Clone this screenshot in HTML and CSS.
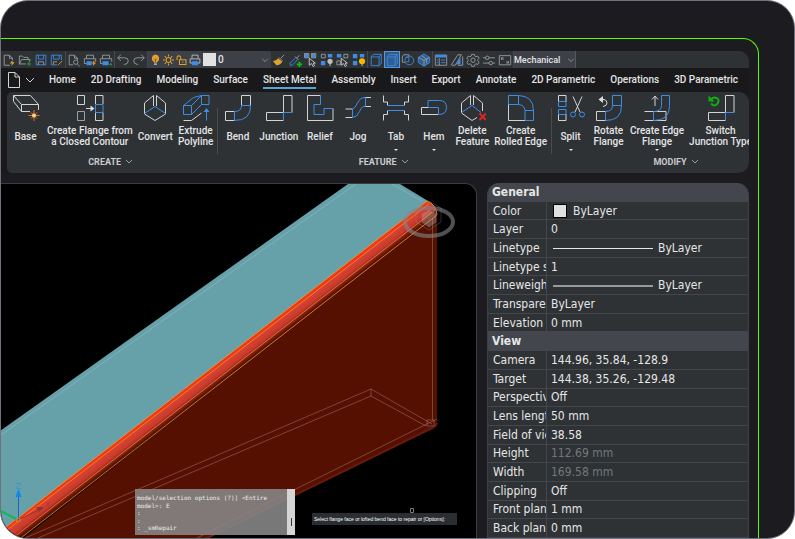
FILE: index.html
```html
<!DOCTYPE html>
<html lang="en">
<head>
<meta charset="utf-8">
<title>Sheet Metal</title>
<link rel="stylesheet" href="styles.css">
</head>
<body>
<div class="window">
<div class="frame">
<header class="app-head">
  <div class="quickbar">
    <div class="quick-group">
      <button aria-label="New"><svg viewBox="0 0 16 16"><path class="g" d="M9 14H2.500V2.500H8.500L12 6V8M8.500 2.500V6H12"/><path class="of" d="M12 8l-3 4h2.500l-1 3 4-4.500h-2.500z"/></svg></button>
      <button aria-label="Open"><svg viewBox="0 0 16 16"><path class="g" d="M1.500 13V3.500H5L6.500 5H11.500V7.500M1.500 12.500L4 7.500H14L13 10M1.500 12.500H9"/><path class="gr" d="M12.500 10V15M10 12.500H15"/></svg></button>
      <button aria-label="Save"><svg viewBox="0 0 16 16"><path class="b" d="M2.500 2.500H13.500V13.500H2.500zM5 2.500V7H11V2.500"/><path class="g" d="M5 13.500V10H11V13.500"/></svg></button>
      <button aria-label="Save as"><svg viewBox="0 0 16 16"><path class="b" d="M8 13.500H1.500V2.500H13V8M4 2.500V7H10.500V2.500"/><path class="g" d="M4 13V10H8"/><path class="o" d="M9 14L14 9"/></svg></button>
    </div>
    <div class="quick-group">
      <button aria-label="Preview"><svg viewBox="0 0 16 16"><path class="g" d="M7 13.500H2.500V2.500H8.500L12 6V8M8.500 2.500V6H12M12 13L14.500 15"/><circle class="g" cx="10" cy="10.500" r="2.500"/></svg></button>
      <button aria-label="Quick print"><svg viewBox="0 0 16 16"><path class="g" d="M4 6V2.500H12V6M4 12H1.500V6.500H14.500V10"/><path class="bf" d="M4 9.500H10V14H4z"/><path class="of" d="M13 8l-3 4h2l-1 3 4-4h-2z"/></svg></button>
      <button aria-label="Print"><svg viewBox="0 0 16 16"><path class="g" d="M4 6V2.500H12V6M4 12H1.500V6.500H14.500V10"/><path class="bf" d="M4 9.500H11V14H4z"/><path class="gr" d="M12 13H15M13.500 11.500V14.500"/></svg></button>
    </div>
    <div class="quick-group">
      <button aria-label="Undo"><svg viewBox="0 0 16 16"><path class="g" d="M5.500 2L2 5.500L5.500 9M2 5.500H10Q14 5.500 14 9T10 13H9"/></svg></button>
      <button aria-label="Redo"><svg viewBox="0 0 16 16"><path class="g" d="M10.500 2L14 5.500L10.500 9M14 5.500H6Q2 5.500 2 9T6 13H7"/></svg></button>
    </div>
    <div class="layer-box">
      <svg viewBox="0 0 16 16"><path class="of" d="M8 0a5.500 5.500 0 0 0-3 10l1 2h4l1-2a5.500 5.500 0 0 0-3-10z"/><path class="w s15" d="M6 14H10"/><path class="k" d="M6 6l2 2 2-2M8 8v3"/></svg>
      <svg viewBox="0 0 16 16"><circle class="o s15" cx="8" cy="8" r="3.500"/><path class="o s15" d="M8 0V3M8 13V16M0 8H3M13 8H16M2.500 2.500L4.500 4.500M11.500 11.500L13.500 13.500M2.500 13.500L4.500 11.500M11.500 4.500L13.500 2.500"/></svg>
      <svg viewBox="0 0 16 16"><path class="o s15" d="M5 7.500H14.500V14.500H5zM10 10V12M1.500 8V4.500Q1.500 2 4 2T7 4.500V7"/></svg>
      <svg viewBox="0 0 16 16"><path class="w" d="M4 6V1.500H12V6M4 12H1.500V6.500H14.500V12H12"/><path class="bf" d="M4 9.500H12V15H4z"/></svg>
      <span class="layer-swatch"></span>
      <select class="layer-select" aria-label="Layer"><option>0</option></select>
      <svg class="chev" viewBox="0 0 10 10"><path class="g" d="M1.500 3.500L5 7L8.500 3.500"/></svg>
    </div>
    <div class="quick-group">
      <button aria-label="Match properties"><svg viewBox="0 0 16 16"><path class="g" d="M10 6L14 2M8 5L12 9"/><path class="of" d="M7 6L12 10Q9 14 5 14L1 9Q5 9 7 6z"/></svg></button>
      <button aria-label="Pick layer"><svg viewBox="0 0 16 16"><path class="b" d="M9 5L2.500 11.500V14H5L11 7.500"/><path class="g" d="M8 4L12 8M10 6L13 2.500"/><path class="gr s2" d="M13 10V16M10 13H16"/></svg></button>
      <button aria-label="Select similar"><svg viewBox="0 0 16 16"><path class="bf" d="M1 1H5V5H1zM9 1H13V5H9z"/><path class="g" d="M.5.5H5.500V5.500H.5zM8.500.5H13.500V5.500H8.500z"/><path class="w" d="M6 6V14L8.500 12L10.500 15.500L12 14.500L10.500 11.500H13z"/></svg></button>
      <button aria-label="Isolate"><svg viewBox="0 0 16 16"><path class="g" d="M1.500 1.500H6V5.500H1.500z"/><path class="bf" d="M1 9H6V14H1zM9 1H14V5H9z"/><circle cx="11.500" cy="9.500" r="3" fill="#bbb"/><path class="w" d="M11.500 11V15"/></svg></button>
      <button aria-label="Pick objects"><svg viewBox="0 0 16 16"><path class="g" d="M9 1.500H13.500V5.500H9zM1 9H5V13.500H1z"/><path class="bf" d="M1 1H6V5H1z"/><path class="w" d="M6 6V14L8.500 12L10.500 15.500L12 14.500L10.500 11.500H13z"/></svg></button>
      <button aria-label="Show all"><svg viewBox="0 0 16 16"><path class="bf" d="M1 1H6V6H1zM9 1H14V5H9zM1 9H6V14H1z"/><circle cx="11.500" cy="9.500" r="3.500" fill="#f7b900"/><path class="w" d="M11.500 13V15"/></svg></button>
    </div>
    <div class="quick-group">
      <button aria-label="Box"><svg viewBox="0 0 16 16"><path class="b" d="M2.500 4.500H11.500V14.500H2.500zM2.500 4.500L5 1.500H14V11.500L11.500 14.500M11.500 4.500L14 1.500"/></svg></button>
      <button class="on" aria-label="Shaded box"><svg viewBox="0 0 16 16"><path class="b fillb" d="M2.500 4.500H11.500V14.500H2.500zM2.500 4.500L5 1.500H14V11.500L11.500 14.500M11.500 4.500L14 1.500"/></svg></button>
      <button aria-label="Boundary"><svg viewBox="0 0 16 16"><path class="g" d="M5 10.500H1.500V4.500L3 2H9V4"/><circle class="b" cx="9.500" cy="8.500" r="5"/><path class="b" d="M5 5H9V10H6"/></svg></button>
      <button aria-label="Iso cube"><svg viewBox="0 0 16 16"><path class="b fillb" d="M8 1L14.500 5V11L8 15L1.500 11V5z"/><path class="g" d="M1.500 5L8 8.500L14.500 5M8 8.500V15M5 3L11 7V12"/></svg></button>
    </div>
    <div class="quick-group">
      <button aria-label="Properties"><svg viewBox="0 0 16 16"><path class="g" d="M1.500 2.500H14.500V14H1.500zM6 6V14"/><path class="bf" d="M2 2H14V5H2z"/><path class="b" d="M3 8H5M3 11H5M8 8H13M8 11H13"/></svg></button>
      <button aria-label="Materials"><svg viewBox="0 0 16 16"><path class="g" d="M1.500 13.500L9 2H13L6 14H2zM14.500 4V14H9"/><path class="bf" d="M12 5V13H7z"/></svg></button>
      <button aria-label="Settings"><svg viewBox="0 0 16 16"><path class="g" d="M6.500 1.500h3l.5 2 1.500.8 2-.8 1.500 2.500-1.500 1.500v1.500l1.500 1.500-1.500 2.500-2-.6-1.500.8-.5 2h-3l-.5-2-1.500-.8-2 .6L1 10.500 2.500 9V7.500L1 6l1.500-2.500 2 .8L6 3.500z"/><circle class="g" cx="8" cy="8.200" r="2.500"/></svg></button>
      <button aria-label="Options"><svg viewBox="0 0 16 16"><path class="g" d="M1 5.500H4M8 5.500H15M1 11.500H8M12 11.500H15"/><circle class="g" cx="6" cy="5.500" r="2"/><circle class="g" cx="10" cy="11.500" r="2"/></svg></button>
      <button aria-label="Full screen"><svg viewBox="0 0 16 16"><path class="g" d="M1.500 3H14.500V13.500H1.500zM4 8V5.500H6.500M4 5.500L6.500 8M12 9V11.500H9.500M12 11.500L9.500 9"/></svg></button>
    </div>
    <div class="space-box">
      <select class="space-select" aria-label="Workspace"><option>Mechanical</option></select>
      <svg class="chev" viewBox="0 0 10 10"><path class="g" d="M1.500 3.500L5 7L8.500 3.500"/></svg>
    </div>
  </div>

  <nav class="tabs">
    <button class="file-menu" aria-label="File menu"><svg viewBox="0 0 30 18"><path class="w" d="M1.500 1.500H8L12.500 6V16.500H1.500zM8 1.500V6H12.500M19 7L23 11L27 7"/></svg></button>
    <a href="#">Home</a><a href="#">2D Drafting</a><a href="#">Modeling</a><a href="#">Surface</a><a href="#" class="active">Sheet Metal</a><a href="#">Assembly</a><a href="#">Insert</a><a href="#">Export</a><a href="#">Annotate</a><a href="#">2D Parametric</a><a href="#">Operations</a><a href="#">3D Parametric</a>
  </nav>

  <div class="ribbon">
    <section class="group">
      <div class="tools">
        <button class="tool"><svg viewBox="0 0 28 28"><path class="w" d="M1.500 1.500H18.500L26.500 10.500H9.500zM1.500 1.500V7.500L9.500 17.500H18M9.500 10.500V17.500M26.500 10.500V16"/><path class="star" d="M22 16V27M16.500 21.500H27.500M19 18.500L25 24.500M25 18.500L19 24.500"/><circle cx="22" cy="21.500" r="2" fill="#ffd27c"/></svg><span>Base</span></button>
        <button class="tool"><svg viewBox="0 0 28 28"><path class="w" d="M1.500 1.500H8.500V10.500H1.500zM19.500 10V1.500H27V10M19.500 18.500V26.500H27V18.500M10 14.500H17"/><path class="g" d="M1.500 17.500H8.500V26.500H1.500z"/><path fill="#ddd" d="M14.500 11.500L18.500 14.500L14.500 17.500z"/><path class="b" d="M19.500 10.500H27V18.500H19.500z"/></svg><span>Create Flange from<br>a Closed Contour</span></button>
        <button class="tool"><svg viewBox="0 0 28 28"><path class="w" d="M12.500 12V1.500L3.500 9V20L14 26.500L24.500 20V9L15.500 1.500V12"/><path class="b" d="M3.500 19.500L14 12.500L24.500 19.500"/></svg><span>Convert</span></button>
        <button class="tool"><svg viewBox="0 0 28 28"><path class="b" d="M1.500 11.500H9.500V20.500H1.500zM9.500 11.500L19.500 1.500V10.500L9.500 20.500M19.500 1.500H27V10.500H19.500M1.500 11.500L11.500 3.500L19.500 1.500"/><path class="w" d="M1.500 26.500H9.500L19.500 19"/><path class="b" d="M24.500 26.500V15.500"/><path class="bf" d="M21.500 18L24.500 14L27.500 18z"/></svg><span>Extrude<br>Polyline</span></button>
      </div>
      <button class="group-name">CREATE <svg viewBox="0 0 10 10"><path class="g" d="M2 3L5 6L8 3"/></svg></button>
    </section>

    <section class="group">
      <div class="tools">
        <button class="tool"><svg viewBox="0 0 28 28"><path class="w" d="M17.500 11.500V1.500H26.500V11.500M10.500 17.500H1.500V26.500H10.500"/><path class="b" d="M17.500 11.500H26.500Q27 26.500 10.500 26.500V17.500Q17.500 17.500 17.500 11.500z"/></svg><span>Bend</span></button>
        <button class="tool"><svg viewBox="0 0 28 28"><path class="w" d="M18.500 18.500V1.500H27V18.500M18.500 18.500H1.500V26.500H18.500"/><path class="b" d="M27 18.500H18.500V26.500"/></svg><span>Junction</span></button>
        <button class="tool"><svg viewBox="0 0 28 28"><path class="w" d="M14.500 1.500H1.500V26.500H27V14.500H20"/><path class="b" d="M14.500 1.500V10.500H8V20.500H18V14.500H27"/></svg><span>Relief</span></button>
        <button class="tool"><svg viewBox="0 0 28 28"><path class="w" d="M1.500 15H8.500M1.500 23.500H8.500M20 3.500H27M20 12.500H27"/><path class="b" d="M8.500 15V23.500Q13 23.500 15.500 17.500T21.500 12.500V3.500Q16 3.500 13.500 9T8.500 15z"/></svg><span>Jog</span></button>
        <button class="tool menu"><svg viewBox="0 0 28 28"><path class="w" d="M1.500 1.500V8H5.500V11.500M26.500 1.500V8H22.500V11.500M1.500 26.500V20.500H5.500V16.500M26.500 26.500V20.500H22.500V16.500"/><path class="b" d="M5 11.500H23M5 16.500H23"/></svg><span>Tab</span></button>
        <button class="tool menu"><svg viewBox="0 0 28 28"><path class="w" d="M18 13.500H1.500V20.500H18"/><path class="b" d="M8 13V6.500H19.500Q26.500 6.500 26.500 13.500T18.500 20.500V13.500H8"/></svg><span>Hem</span></button>
        <button class="tool"><svg viewBox="0 0 28 28"><path class="w" d="M12.500 11V1.500L3.500 9V19L14 26.500L19 23.500M15.500 1.500V11M15.500 1.500L24.500 9V17"/><path class="b" d="M3.500 18.500L14 11.500L23 18.500"/><path class="x" d="M21.500 19.500L28 26M28 19.500L21.500 26"/></svg><span>Delete<br>Feature</span></button>
        <button class="tool"><svg viewBox="0 0 28 28"><path class="w" d="M1.500 10V26.500H18"/><path class="b" d="M1.500 10.500V1.500H11.500Q26.500 2 26.500 16.500V26.500H18V16.500H26.500M1.500 10.500H11.500V1.500M11.500 10.500Q17.500 11 18 16.500"/></svg><span>Create<br>Rolled Edge</span></button>
      </div>
      <button class="group-name">FEATURE <svg viewBox="0 0 10 10"><path class="g" d="M2 3L5 6L8 3"/></svg></button>
    </section>

    <section class="group last">
      <div class="tools">
        <button class="tool menu"><svg viewBox="0 0 28 28"><path class="w" d="M1.500 8V1.500H9V8M1.500 20V26.500H9V20M16 2.500L23 18M25 2.500L18 18"/><path class="b" d="M1.500 7.500H9V12.500H1.500zM1.500 15.500H9V20.500H1.500z"/><circle class="b" cx="16" cy="20.500" r="2.500"/><circle class="b" cx="25" cy="20.500" r="2.500"/></svg><span>Split</span></button>
        <button class="tool"><svg viewBox="0 0 28 28"><path class="w" d="M10.500 17.500H1.500V26.500H10.500V17.500M4 5.500H9Q12 6 12 9T8 12.500"/><path fill="#ddd" d="M3.500 5.500L8 2V9z"/><path class="b" d="M17.500 11.500V1.500H26.500V11.500Q27 26.500 10.500 26.500V17.500Q17.500 17.500 17.500 11.500H26.500"/></svg><span>Rotate<br>Flange</span></button>
        <button class="tool menu"><svg viewBox="0 0 28 28"><path class="w" d="M1.500 17.500H23V26.500H1.500M12 12V2.500M9 5.500L12 2L15 5.500"/><path class="b" d="M18.500 11.500V1.500H26.500V11.500Q27 26.500 10.500 26.500V17.500Q18.500 17.500 18.500 11.500z"/></svg><span>Create Edge<br>Flange</span></button>
        <button class="tool"><svg viewBox="0 0 28 28"><path class="w" d="M18.500 18.500V1.500H27V18.500M18.500 18.500H1.500V26.500H18.500"/><path class="b" d="M27 18.500H18.500V26.500"/><path class="sw" d="M3.500 6.500Q6 2.500 9.500 4T10.500 9.500T4 9.500"/><path fill="#0fae12" d="M1.500 1.500V7.500H7.500z"/></svg><span>Switch<br>Junction Type</span></button>
      </div>
      <button class="group-name">MODIFY <svg viewBox="0 0 10 10"><path class="g" d="M2 3L5 6L8 3"/></svg></button>
    </section>
  </div>
</header>

<main class="work">
  <section class="view">
    <svg class="scene" viewBox="1 184 475 354" preserveAspectRatio="xMidYMid slice" aria-hidden="true">
      <defs>
        <linearGradient id="roll" gradientUnits="userSpaceOnUse" x1="300" y1="299.500" x2="310" y2="312.400">
          <stop offset="0" stop-color="#f23a12"/><stop offset=".2" stop-color="#ea3a18"/><stop offset=".26" stop-color="#d44233"/><stop offset=".6" stop-color="#c93a2c"/><stop offset=".8" stop-color="#8c2113"/><stop offset="1" stop-color="#551002"/>
        </linearGradient>
      </defs>
      <path fill="#66a0a9" d="M348 184H400L428 201L-10 540V438z"/>
      <path fill="#551002" d="M437 212V421Q437 427 431 429L203 540H21z"/>
      <path d="M437 423Q436 427 430 429L203 540" fill="none" stroke="#6a1a0c" stroke-width="2"/>
      <path fill="url(#roll)" d="M427 201Q436 204 437 214L17 541L-12 541z"/>
      <g fill="none" stroke="#f2a23c" stroke-opacity=".75" stroke-width="1">
        <path d="M427 201L-12 541M437 215L17 541M427 201Q436 204 437 215"/>
        <path stroke-opacity=".65" d="M429 204L-7 541M435 210L9 541"/>
      </g>
      <g fill="none" stroke="#d4b5ab" stroke-opacity=".32" stroke-width="1">
        <path d="M432.500 218V420M25 538L371 389L432 424M38 538L371 396L426 426M371 389V396M437 419L193 540M427 420V426H434V420z"/>
      </g>
      <path d="M1 435L356 184M392 184L422 201" fill="none" stroke="#9fc2c8" stroke-opacity=".5"/>
      <ellipse cx="429" cy="222" rx="24" ry="14" fill="none" stroke="#85858a" stroke-opacity=".6" stroke-width="4"/>
      <g fill="#c9c4c4" fill-opacity=".3" stroke="#888" stroke-opacity=".35" stroke-width="1">
        <path d="M429 210L436 214V222L429 227L422 222V214z"/>
        <path fill="none" d="M429 201L441 208V222L429 230L416 222V208zM422 214L429 218L436 214M429 218V227"/>
      </g>
      <g fill="none" stroke-width="1">
        <path stroke="#17b65a" stroke-width="2" d="M1 511L18 520"/>
        <path stroke="#8f3434" d="M18 520L43 508"/>
        <path fill="#8f3434" d="M36 507L44 507L39 512z"/>
        <path stroke="#1565d8" d="M18.500 520V495"/>
        <path fill="#1185ee" d="M15.500 497L18.500 489L21.500 497z"/>
        <path stroke="#2491dd" stroke-opacity=".7" d="M16 483.500H21L16 488.500H21"/>
        <path stroke="#a33b34" stroke-opacity=".7" d="M46 502L50 506M50 502L46 506"/>
        <path stroke="#dd7a20" d="M16.500 518.500H20V521.500H16.500z"/>
        <path stroke="#7b7b7b" d="M410.500 508.500H413.500V512.500H410.500z"/>
      </g>
    </svg>
    <div class="console">
      <div class="console-text"><p>model/selection options (?)] &lt;Entire</p><p>model&gt;: E</p><p>:</p><p>:</p><p>: _smRepair</p></div>
      <div class="console-bar"><i></i></div>
    </div>
    <div class="prompt">Select flange face or lofted bend face to repair or [Options]:</div>
  </section>

  <aside class="props">
    <table>
      <tbody>
        <tr class="sec"><th colspan="2">General</th></tr>
        <tr><th>Color</th><td><span class="swatch"></span>ByLayer</td></tr>
        <tr><th>Layer</th><td>0</td></tr>
        <tr><th>Linetype</th><td><span class="line"></span>ByLayer</td></tr>
        <tr><th>Linetype scale</th><td>1</td></tr>
        <tr><th>Lineweight</th><td><span class="line thick"></span>ByLayer</td></tr>
        <tr><th>Transparency</th><td>ByLayer</td></tr>
        <tr><th>Elevation</th><td>0 mm</td></tr>
        <tr class="sec"><th colspan="2">View</th></tr>
        <tr><th>Camera</th><td>144.96, 35.84, -128.9</td></tr>
        <tr><th>Target</th><td>144.38, 35.26, -129.48</td></tr>
        <tr><th>Perspective</th><td>Off</td></tr>
        <tr><th>Lens length</th><td>50 mm</td></tr>
        <tr><th>Field of view</th><td>38.58</td></tr>
        <tr><th>Height</th><td class="dim">112.69 mm</td></tr>
        <tr><th>Width</th><td class="dim">169.58 mm</td></tr>
        <tr><th>Clipping</th><td>Off</td></tr>
        <tr><th>Front plane</th><td>1 mm</td></tr>
        <tr><th>Back plane</th><td>0 mm</td></tr>
      </tbody>
    </table>
  </aside>
</main>
</div>
</div>
</body>
</html>
```
FILE: styles.css
```css
* { box-sizing: border-box; }

body {
  margin: 0;
  background: #fff;
  font-family: Roboto, "Liberation Sans", sans-serif;
  font-size: 10px;
  font-weight: 500;
  color: #e4e4e6;
}

button, select {
  margin: 0;
  padding: 0;
  border: 0;
  background: none;
  color: inherit;
  font: inherit;
}

svg { display: block; flex: none; }

/* icon strokes */
.w, .g, .b, .o, .gr, .k, .x, .sw, .star { fill: none; stroke-width: 1; }
.w { stroke: #d2d4d6; }
.g { stroke: #9b9ea2; }
.b { stroke: #3d8ce6; }
.o { stroke: #dfa02f; }
.gr { stroke: #1fa93a; }
.k { stroke: #5c3c08; }
.x { stroke: #e02222; stroke-width: 2; }
.sw { stroke: #0fae12; stroke-width: 2; }
.star { stroke: #e2702a; }
.s15 { stroke-width: 1.5; }
.s2 { stroke: #00c814; stroke-width: 2; }
.bf { fill: #3d8ce6; }
.of { fill: #dfa02f; }
.fillb { fill: #2f5f93; }

/* window */
.window {
  display: flex;
  height: 100vh;
  padding: 37px 35px 0 0;
  overflow: hidden;
  border: 1px solid #71727e;
  border-radius: 28px;
  background: #1c1b20;
}

.frame {
  display: flex;
  flex: 1;
  flex-direction: column;
  gap: 10px;
  min-width: 0;
  padding: 12px 9px 0 0;
  border-top: 1px solid #55ff00;
  border-right: 1px solid #55ff00;
  border-top-right-radius: 16px;
}

.app-head {
  flex: none;
  overflow: hidden;
  border-radius: 0 10px 10px 0;
  background: #19191b;
}

/* quick access bar */
.quickbar {
  display: flex;
  align-items: stretch;
  height: 17px;
  background: #2e3235;
}

.quick-group {
  display: flex;
  flex: none;
  border-right: 1px solid #45484d;
}

.quick-group button {
  display: grid;
  width: 16px;
  place-items: center;
}

.quick-group svg { width: 14px; height: 14px; }

.quick-group .on {
  outline: 1px solid #4d9be8;
  outline-offset: -1px;
  background: #3a5674;
}

.layer-box, .space-box {
  display: flex;
  flex: none;
  align-items: center;
  background: #3e4047;
}

.layer-box {
  gap: 2px;
  width: 123px;
  padding: 0 2px 0 2px;
}

.layer-box svg { width: 11px; height: 12px; }
.layer-box svg:nth-child(4) { width: 12px; }

.layer-swatch {
  flex: none;
  width: 13px;
  height: 13px;
  background: #e2e2e2;
}

.layer-select, .space-select {
  flex: 1;
  min-width: 0;
  appearance: none;
}

.space-box {
  width: 62px;
  border-right: 1px solid #55585d;
}

.layer-box .chev, .space-box .chev { width: 8px; height: 8px; }

.space-select { font-size: 9px; }

/* tab row */
.tabs {
  display: flex;
  align-items: center;
  gap: 15px;
  height: 24px;
  padding-left: 6px;
  white-space: nowrap;
}

.tabs a {
  flex: none;
  padding: 3px 0 1px;
  border-bottom: 2px solid transparent;
  color: inherit;
  line-height: 12px;
  text-decoration: none;
}

.tabs .active { border-color: #5ba4da; }

.file-menu { width: 27px; flex: none; }
.file-menu svg { width: 30px; height: 18px; }

/* ribbon */
.ribbon {
  display: flex;
  height: 81px;
  margin-left: 6px;
  overflow: hidden;
  border-radius: 5px 10px 10px 5px;
  background: #2e3235;
}

.group {
  position: relative;
  display: flex;
  flex: none;
  flex-direction: column;
  padding: 2px 4px 0 2px;
}

.group + .group { padding-left: 4px; }

.group + .group::before {
  position: absolute;
  top: 16px;
  left: 0;
  width: 1px;
  height: 46px;
  background: #484c50;
  content: "";
}

.group.last { min-width: 252px; padding-left: 3px; }

.tools { display: flex; gap: 5px; }

.tool {
  display: flex;
  flex: none;
  flex-direction: column;
  align-items: center;
  min-width: 33px;
  height: 60px;
  line-height: 11px;
  white-space: nowrap;
}

.tool svg { width: 28px; height: 28px; }

.tool span {
  display: grid;
  align-content: center;
  height: 22px;
  margin-top: 3px;
}

.tool.menu::after {
  margin-top: 2px;
  border: 2px solid transparent;
  border-top-color: #e4e4e6;
  content: "";
}

.group-name {
  display: flex;
  align-items: center;
  justify-content: center;
  gap: 3px;
  height: 15px;
  color: #c9cbce;
  font-size: 9px;
  font-weight: 700;
}

.group-name svg { width: 10px; height: 10px; }

/* work area */
.work {
  display: flex;
  flex: 1;
  gap: 10px;
  min-height: 0;
}

.view {
  position: relative;
  flex: 1;
  min-width: 0;
  overflow: hidden;
  border: solid #3d3e45;
  border-width: 1px 1px 0 0;
  border-top-right-radius: 12px;
  background: #000;
}

.scene { width: 100%; height: 100%; }

.console {
  position: absolute;
  bottom: 3px;
  left: 134px;
  display: flex;
  width: 160px;
  height: 46px;
  background: #858585e6;
  color: #eee;
  font: 6px/7px "DejaVu Sans Mono", monospace;
}

.console-text {
  display: flex;
  flex: 1;
  flex-direction: column;
  justify-content: space-between;
  padding: 5px 0 4px 2px;
  white-space: pre;
}

.console-text p { margin: 0; }

.console-bar {
  display: flex;
  align-items: flex-end;
  justify-content: center;
  width: 8px;
  padding-bottom: 9px;
  background: #d5d5d5;
}

.console-bar i {
  width: 1px;
  height: 8px;
  background: #333;
}

.prompt {
  position: absolute;
  bottom: 13px;
  left: 311px;
  width: 145px;
  height: 12px;
  padding-left: 2px;
  background: #2a2e33;
  color: #fff;
  font: 5px/12px "Liberation Sans", sans-serif;
  white-space: nowrap;
}

/* properties */
.props {
  display: flex;
  flex: none;
  width: 262px;
  overflow: hidden;
  border: solid #3d4045;
  border-width: 0 1px;
  border-radius: 12px 12px 0 0;
  background: #2e3235;
  font: 12px/15px "DejaVu Sans Condensed", "DejaVu Sans", sans-serif;
  color: #e6e6e6;
}

.props table, .props tbody {
  display: grid;
  flex: 1;
  grid-auto-rows: 1fr;
}

.props tr {
  display: grid;
  grid-template-columns: 59px 1fr;
  border-bottom: 1px solid #43474b;
}

.props th, .props td {
  display: flex;
  align-items: center;
  overflow: hidden;
  padding: 1px 0 0 5px;
  font-weight: 400;
  white-space: nowrap;
}

.props tr th { border-right: 1px solid #43474b; }

.props td { padding-left: 4px; }

.props .sec { grid-template-columns: 1fr; background: #43464c; }
.props .sec th { border: 0; padding-left: 4px; font-weight: 700; }

.props .dim { color: #74777a; }

.swatch {
  width: 14px;
  height: 14px;
  margin: 0 6px 0 2px;
  border: 1px solid #000;
  background: #e0e0e0;
}

.line {
  width: 100px;
  height: 1px;
  margin: 0 5px 0 2px;
  background: #e6e6e6;
}

.line.thick { height: 2px; background: #999; }
```
